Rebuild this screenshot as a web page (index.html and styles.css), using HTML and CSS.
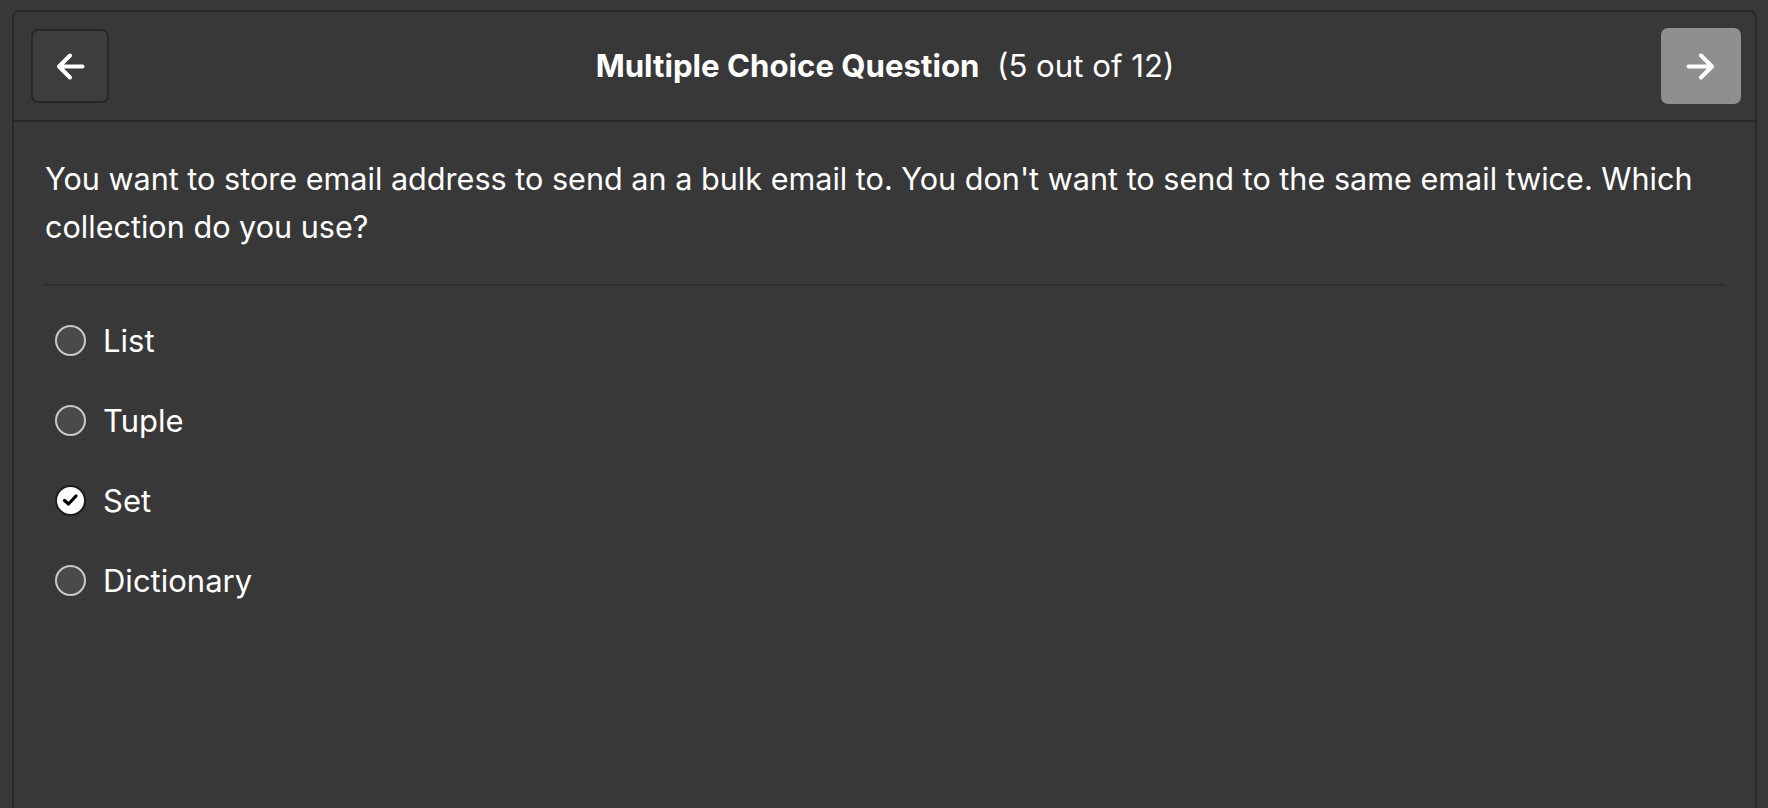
FILE: index.html
```html
<!DOCTYPE html>
<html lang="en">
<head>
<meta charset="utf-8">
<title>Multiple Choice Question</title>
<link rel="stylesheet" href="styles.css">
</head>
<body>
<div class="card">
  <header class="card-header">
    <button class="nav-btn back" aria-label="Previous">
      <svg width="29" height="27" viewBox="0 0 29 27" fill="none" stroke="#fff" stroke-width="4" stroke-linecap="round" stroke-linejoin="round"><path d="M26.5 13.5H3M14 2.5L3 13.5L14 24.5"/></svg>
    </button>
    <h1 class="title"><strong>Multiple Choice Question</strong>&nbsp;&nbsp;<span class="count">(5 out of 12)</span></h1>
    <button class="nav-btn next" aria-label="Next">
      <svg width="29" height="27" viewBox="0 0 29 27" fill="none" stroke="#fff" stroke-width="4" stroke-linecap="round" stroke-linejoin="round"><path d="M2.5 13.5H26M15 2.5L26 13.5L15 24.5"/></svg>
    </button>
  </header>
  <section class="card-body">
    <p class="question">You want to store email address to send an a bulk email to. You don't want to send to the same email twice. Which collection do you use?</p>
    <hr class="divider">
    <ul class="options">
      <li class="option"><span class="radio"></span><span class="label">List</span></li>
      <li class="option"><span class="radio"></span><span class="label">Tuple</span></li>
      <li class="option"><span class="radio checked"><svg width="17" height="14" viewBox="0 0 17 14" fill="none" stroke="#000" stroke-width="3.2" stroke-linecap="round" stroke-linejoin="round"><path d="M2.5 7.5L6.5 11L14 3"/></svg></span><span class="label">Set</span></li>
      <li class="option"><span class="radio"></span><span class="label">Dictionary</span></li>
    </ul>
  </section>
</div>
</body>
</html>
```
FILE: styles.css
```css
* { box-sizing: border-box; }
html, body { height: 100%; }
body {
  margin: 0;
  padding: 10px 11px 0 12px;
  background: #383838;
  color: #fff;
  font-family: Inter, "Noto Sans", "Liberation Sans", sans-serif;
  overflow: hidden;
}
.card {
  border: 2px solid #282828;
  border-radius: 8px;
  min-height: 900px;
  background: #383838;
}
.card-header {
  display: flex;
  align-items: center;
  justify-content: space-between;
  padding: 16px 14px 16px 17px;
  border-bottom: 2px solid #282828;
}
.nav-btn {
  display: flex;
  align-items: center;
  justify-content: center;
  padding: 0;
  border-radius: 7px;
  cursor: pointer;
}
.nav-btn.back {
  width: 78px;
  height: 74px;
  background: #3d3d3d;
  border: 2px solid #282828;
}
.nav-btn.next {
  width: 80px;
  height: 76px;
  background: #8f8f8f;
  border: none;
}
.title {
  margin: 0;
  font-size: 31.2px;
  font-weight: 400;
}
.title strong { font-weight: 700; }
.card-body {
  padding: 0 29px 0 31px;
}
.question {
  margin: 0;
  padding-top: 33px;
  font-size: 30.6px;
  line-height: 48px;
}
.divider {
  margin: 33px 0 0;
  border: none;
  border-top: 2px solid #2e2e2e;
}
.options {
  list-style: none;
  margin: 0;
  padding: 30px 0 0 10px;
  display: flex;
  flex-direction: column;
  gap: 32px;
}
.option {
  display: flex;
  align-items: center;
  gap: 17px;
  height: 48px;
  font-size: 31px;
}
.radio {
  width: 31px;
  height: 31px;
  border-radius: 50%;
  border: 2px solid #c9c9c9;
  background: #4a4a4a;
  display: flex;
  align-items: center;
  justify-content: center;
  flex: none;
}
.radio.checked {
  background: #fff;
  border-color: #1e1e1e;
}
```
